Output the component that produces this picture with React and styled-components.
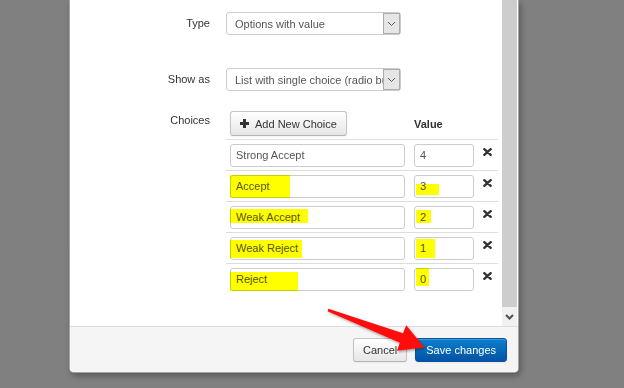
import styled, { createGlobalStyle } from "styled-components";

const GlobalStyle = createGlobalStyle`
  html, body {
    margin: 0;
    padding: 0;
    background: #808080;
  }
  body {
    font-family: "Liberation Sans", Arial, sans-serif;
    font-size: 11px;
    color: #333;
  }
`;

const Page = styled.div`
  position: relative;
  width: 624px;
  height: 388px;
  overflow: hidden;
`;

const Modal = styled.div`
  margin-left: 69px;
  width: 450px;
  box-sizing: border-box;
  background: #fff;
  border: 1px solid rgba(0, 0, 0, 0.35);
  border-top: none;
  border-radius: 0 0 5px 5px;
  box-shadow: 2px 3px 6px rgba(0, 0, 0, 0.3);
  overflow: hidden;
`;

const Body = styled.div`
  display: flex;
  height: 326px;
`;

const Content = styled.div`
  flex: 1;
  padding: 12px 0 0 12px;
`;

const Scrollbar = styled.div`
  width: 15px;
  margin-right: 1px;
  display: flex;
  flex-direction: column;
`;

const Thumb = styled.div`
  flex: 1;
  background: #cdcdcd;
`;

const ScrollArrow = styled.div`
  height: 19px;
  background: #f1f1f1;
  display: flex;
  align-items: center;
  justify-content: center;
`;

const Group = styled.div`
  display: flex;
  gap: 16px;
  margin-bottom: ${(p) => p.$gap || 0}px;
`;

const Label = styled.div`
  width: 128px;
  text-align: right;
  line-height: ${(p) => (p.$top ? "13px" : "23px")};
  padding-top: ${(p) => (p.$top ? "7px" : "0")};
`;

const Select = styled.div`
  width: 175px;
  height: 23px;
  box-sizing: border-box;
  border: 1px solid #ccc;
  border-radius: 3px;
  background: #fff;
  display: flex;
  align-items: stretch;
  color: #555;
`;

const SelectText = styled.span`
  flex: 1;
  min-width: 0;
  overflow: hidden;
  white-space: nowrap;
  padding-left: 8px;
  line-height: 22px;
`;

const DropButton = styled.span`
  width: 15px;
  border: 1px solid #acacac;
  background: #e6e6e6;
  display: flex;
  align-items: center;
  justify-content: center;
`;

const Table = styled.table`
  border-collapse: collapse;
  table-layout: fixed;
  width: 272px;
`;

const Th = styled.th`
  width: ${(p) => p.$w}px;
  padding: 4px 4px 3px;
  text-align: left;
  font-weight: bold;
  vertical-align: middle;
  white-space: nowrap;
`;

const Td = styled.td`
  padding: 4px 4px 3px;
  border-top: 1px solid #ddd;
  vertical-align: top;
`;

const Button = styled.button`
  font-family: inherit;
  font-size: 11px;
  color: #333;
  height: ${(p) => p.$h || 24}px;
  padding: 0 9px;
  display: inline-flex;
  align-items: center;
  gap: 6px;
  white-space: nowrap;
  border: 1px solid #c5c5c5;
  border-bottom-color: #b3b3b3;
  border-radius: 3px;
  background: linear-gradient(to bottom, #ffffff, #e6e6e6);
  box-shadow: inset 0 1px 0 rgba(255, 255, 255, 0.2), 0 1px 2px rgba(0, 0, 0, 0.05);
`;

const PrimaryButton = styled(Button)`
  color: #fff;
  padding: 0 10px;
  border-color: #0850a0;
  background: linear-gradient(to bottom, #0a80cb, #0452a6);
`;

const Field = styled.div`
  position: relative;
  width: ${(p) => p.$w}px;
  height: 23px;
  box-sizing: border-box;
  border: 1px solid #ccc;
  border-radius: 3px;
  background: #fff;
  color: #555;
  padding-left: 5px;
  line-height: 21px;
  white-space: nowrap;
`;

const Mark = styled.span`
  position: absolute;
  background: #ffff00;
  mix-blend-mode: multiply;
  pointer-events: none;
`;

const Remove = styled.svg`
  display: block;
  margin: 4px 0 0 1px;
`;

const Footer = styled.div`
  border-top: 1px solid #ddd;
  background: #f5f5f5;
  padding: 11px 11px 10px;
  display: flex;
  justify-content: flex-end;
  gap: 8px;
`;

const Overlay = styled.svg`
  position: absolute;
  left: 0;
  top: 0;
  pointer-events: none;
`;

const choices = [
  { name: "Strong Accept", value: "4" },
  { name: "Accept", value: "3", mark: [-1, -1, 60, 23], vmark: [1, 8, 23, 11] },
  { name: "Weak Accept", value: "2", mark: [-1, 2, 78, 14], vmark: [1, 3, 15, 13] },
  { name: "Weak Reject", value: "1", mark: [-1, 2, 72, 18], vmark: [1, 1, 19, 19] },
  { name: "Reject", value: "0", mark: [-1, 3, 68, 19], vmark: [1, -1, 13, 18] },
];

function Highlight({ box }) {
  if (!box) return null;
  const [left, top, width, height] = box;
  return <Mark style={{ left, top, width, height }} />;
}

function Chevron({ color = "#555", w = 1 }) {
  return (
    <svg width="9" height="6" viewBox="0 0 9 6">
      <polyline points="1,1 4.5,4.5 8,1" fill="none" stroke={color} strokeWidth={w} />
    </svg>
  );
}

export default function App() {
  return (
    <Page>
      <GlobalStyle />
      <Modal>
        <Body>
          <Content>
            <Group $gap={33}>
              <Label>Type</Label>
              <Select>
                <SelectText>Options with value</SelectText>
                <DropButton>
                  <Chevron />
                </DropButton>
              </Select>
            </Group>
            <Group $gap={16}>
              <Label>Show as</Label>
              <Select>
                <SelectText>List with single choice (radio bu</SelectText>
                <DropButton>
                  <Chevron />
                </DropButton>
              </Select>
            </Group>
            <Group>
              <Label $top>Choices</Label>
              <Table>
                <thead>
                  <tr>
                    <Th $w={176}>
                      <Button $h={25}>
                        <svg width="9" height="9" viewBox="0 0 9 9">
                          <rect x="0" y="3" width="9" height="3" fill="#333" />
                          <rect x="3" y="0" width="3" height="9" fill="#333" />
                        </svg>
                        Add New Choice
                      </Button>
                    </Th>
                    <Th $w={60}>Value</Th>
                    <Th $w={12} />
                  </tr>
                </thead>
                <tbody>
                  {choices.map((c) => (
                    <tr key={c.name}>
                      <Td>
                        <Field $w={175}>
                          {c.name}
                          <Highlight box={c.mark} />
                        </Field>
                      </Td>
                      <Td>
                        <Field $w={60}>
                          {c.value}
                          <Highlight box={c.vmark} />
                        </Field>
                      </Td>
                      <Td>
                        <Remove width="9" height="8" viewBox="0 0 9 8">
                          <path
                            d="M1.3 1.2 L7.7 6.8 M7.7 1.2 L1.3 6.8"
                            stroke="#333"
                            strokeWidth="2.4"
                            strokeLinecap="round"
                          />
                        </Remove>
                      </Td>
                    </tr>
                  ))}
                </tbody>
              </Table>
            </Group>
          </Content>
          <Scrollbar>
            <Thumb />
            <ScrollArrow>
              <Chevron color="#505050" w={2} />
            </ScrollArrow>
          </Scrollbar>
        </Body>
        <Footer>
          <Button>Cancel</Button>
          <PrimaryButton>Save changes</PrimaryButton>
        </Footer>
      </Modal>
      <Overlay width="624" height="388" viewBox="0 0 624 388">
        <defs>
          <filter id="arrowShadow" x="-10%" y="-10%" width="130%" height="140%">
            <feDropShadow dx="1" dy="1.5" stdDeviation="1" floodColor="#000" floodOpacity="0.35" />
          </filter>
        </defs>
        <polygon
          points="328.4,308.8 403.0,333.2 406.2,325.2 424.5,347.5 397.0,350.8 399.8,342.8 327.6,311.2"
          fill="#ff0b0b"
          filter="url(#arrowShadow)"
        />
      </Overlay>
    </Page>
  );
}
